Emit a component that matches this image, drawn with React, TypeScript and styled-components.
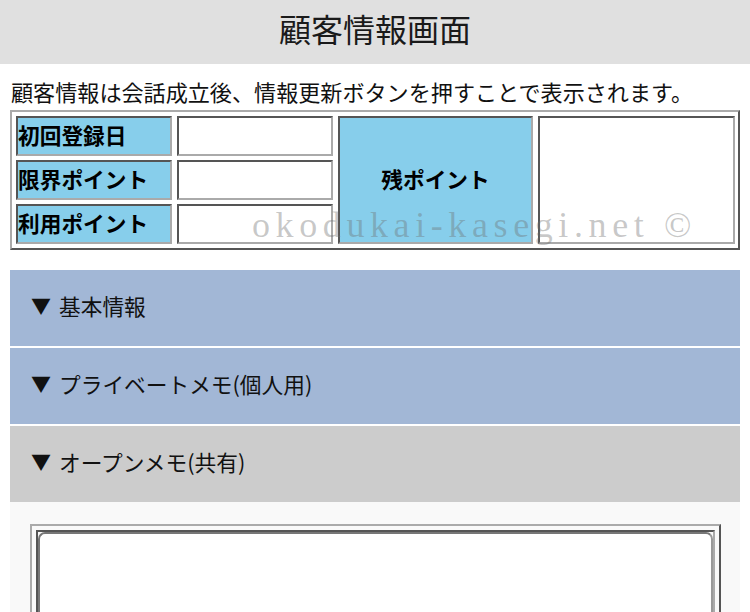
import React from 'react';
import styled, { createGlobalStyle } from 'styled-components';

const GlobalStyle = createGlobalStyle`
  html, body {
    margin: 0;
    padding: 0;
    background: #fff;
  }
  body {
    font-family: "Noto Sans CJK JP", "Noto Sans", sans-serif;
    color: #111;
  }
`;

const Page = styled.div`
  position: relative;
  width: 750px;
  height: 612px;
  overflow: hidden;
`;

const Header = styled.header`
  height: 64px;
  background: #e0e0e0;
  display: flex;
  align-items: center;
  justify-content: center;
  padding-bottom: 9px;
  box-sizing: border-box;
  font-size: 32px;
  color: #1a1a1a;
`;

const Intro = styled.p`
  margin: 12px 0 4px;
  padding-left: 11px;
  font-size: 22.1px;
  line-height: 30px;
  white-space: nowrap;
`;

const InfoTable = styled.div`
  margin: 0 10px;
  display: grid;
  grid-template-columns: 156px 156px 195px 197px;
  grid-template-rows: repeat(3, 40px);
  column-gap: 5px;
  row-gap: 4px;
  padding: 4px 3px 4px 4px;
  border: 2px solid;
  border-color: #aaa #555 #555 #aaa;
`;

const Cell = styled.div<{ $label?: boolean; $col: number; $row: number; $span?: boolean }>`
  box-sizing: border-box;
  grid-column: ${p => p.$col};
  grid-row: ${p => (p.$span ? `${p.$row} / span 3` : p.$row)};
  border: 2px solid;
  border-color: #555 #aaa #aaa #555;
  background: ${p => (p.$label ? '#87ceeb' : '#fff')};
  font-size: 21.7px;
  font-weight: 700;
  color: #000;
  display: flex;
  align-items: center;
  justify-content: ${p => (p.$span ? 'center' : 'flex-start')};
  padding-bottom: 3px;
  white-space: nowrap;
`;

const Sections = styled.div`
  margin: 20px 10px 0;
  display: flex;
  flex-direction: column;
  gap: 2px;
`;

const SectionHead = styled.div<{ $open?: boolean }>`
  height: 76px;
  box-sizing: border-box;
  background: ${p => (p.$open ? '#cccccc' : '#a2b7d6')};
  display: flex;
  align-items: center;
  padding: 0 0 5px 21px;
  font-size: 21.7px;
  color: #111;
  gap: 8px;
`;

const Arrow = styled.span`
  font-size: 20px;
`;

const SectionBody = styled.div`
  margin-top: -2px;
  background: #f9f9f9;
  padding: 22px 19px 0 20px;
  height: 120px;
`;

const MemoFrame = styled.div`
  border: 2px solid;
  border-color: #aaa #555 #555 #aaa;
  padding: 4px 4px 0;
`;

const MemoCell = styled.div`
  border: 2px solid;
  border-color: #555 #aaa #aaa #555;
  border-bottom: none;
`;

const MemoArea = styled.textarea`
  display: block;
  width: 100%;
  height: 140px;
  box-sizing: border-box;
  margin: 0;
  border: 2px solid;
  border-color: #777 #999 #999 #777;
  border-radius: 7px;
  background: #fff;
  resize: none;
  outline: none;
`;

const Watermark = styled.div`
  position: absolute;
  left: 252px;
  top: 207px;
  font-family: "Liberation Serif", serif;
  font-size: 36px;
  line-height: 36px;
  letter-spacing: 5.6px;
  color: rgba(110, 110, 110, 0.38);
  white-space: nowrap;
  pointer-events: none;
`;

export default function App() {
  return (
    <Page>
      <GlobalStyle />
      <Header>顧客情報画面</Header>
      <Intro>顧客情報は会話成立後、情報更新ボタンを押すことで表示されます。</Intro>
      <InfoTable>
        <Cell $label $col={1} $row={1}>初回登録日</Cell>
        <Cell $col={2} $row={1} />
        <Cell $label $col={3} $row={1} $span>残ポイント</Cell>
        <Cell $col={4} $row={1} $span />
        <Cell $label $col={1} $row={2}>限界ポイント</Cell>
        <Cell $col={2} $row={2} />
        <Cell $label $col={1} $row={3}>利用ポイント</Cell>
        <Cell $col={2} $row={3} />
      </InfoTable>
      <Sections>
        <SectionHead>
          <Arrow>▼</Arrow>基本情報
        </SectionHead>
        <SectionHead>
          <Arrow>▼</Arrow>プライベートメモ(個人用)
        </SectionHead>
        <SectionHead $open>
          <Arrow>▼</Arrow>オープンメモ(共有)
        </SectionHead>
        <SectionBody>
          <MemoFrame>
            <MemoCell>
              <MemoArea />
            </MemoCell>
          </MemoFrame>
        </SectionBody>
      </Sections>
      <Watermark>okodukai-kasegi.net ©</Watermark>
    </Page>
  );
}
